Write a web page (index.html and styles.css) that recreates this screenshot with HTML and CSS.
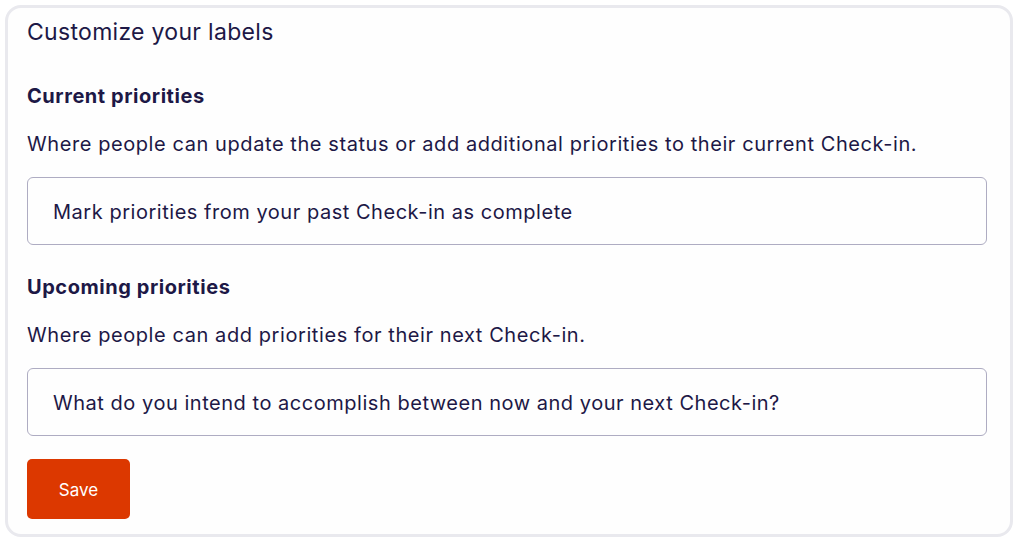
FILE: index.html
```html
<!DOCTYPE html>
<html lang="en">
<head>
<meta charset="utf-8">
<title>Customize your labels</title>
<link rel="stylesheet" href="styles.css">
</head>
<body>
<div class="card">
  <h2 class="title">Customize your labels</h2>
  <section class="group">
    <h3 class="label">Current priorities</h3>
    <p class="desc">Where people can update the status or add additional priorities to their current Check-in.</p>
    <div class="field">Mark priorities from your past Check-in as complete</div>
  </section>
  <section class="group">
    <h3 class="label">Upcoming priorities</h3>
    <p class="desc">Where people can add priorities for their next Check-in.</p>
    <div class="field">What do you intend to accomplish between now and your next Check-in?</div>
  </section>
  <button class="save" type="button">Save</button>
</div>
</body>
</html>
```
FILE: styles.css
```css
* { box-sizing: border-box; }
html, body { margin: 0; background: #ffffff; }
body {
  padding: 5px;
  font-family: Inter, "Noto Sans", sans-serif;
  color: #1d1846;
}
.card {
  width: 1008px;
  height: 532px;
  border: 3px solid #e9e9ee;
  border-radius: 16px;
  background: #fefefe;
  padding: 10px 23px 0 19px;
  display: flex;
  flex-direction: column;
  align-items: flex-start;
}
.title {
  margin: 0;
  font-size: 23px;
  font-weight: 400;
  line-height: 28px;
  letter-spacing: 0.3px;
}
.group { width: 100%; }
.label {
  margin: 38px 0 0;
  font-size: 20px;
  font-weight: 700;
  line-height: 24px;
  letter-spacing: 0.55px;
}
.group + .group .label { margin-top: 30px; }
.desc {
  margin: 24px 0 0;
  font-size: 20px;
  line-height: 24px;
  letter-spacing: 0.58px;
}
.field {
  margin-top: 21px;
  height: 68px;
  width: 100%;
  border: 1px solid #aeacc2;
  border-radius: 6px;
  padding: 1px 25px 0;
  display: flex;
  align-items: center;
  font-size: 20px;
  letter-spacing: 0.53px;
}
.save {
  margin-top: 23px;
  width: 103px;
  height: 60px;
  border: none;
  border-radius: 5px;
  background: #dc3800;
  color: #ffffff;
  font-family: inherit;
  font-size: 17px;
  padding-top: 3px;
}
```
